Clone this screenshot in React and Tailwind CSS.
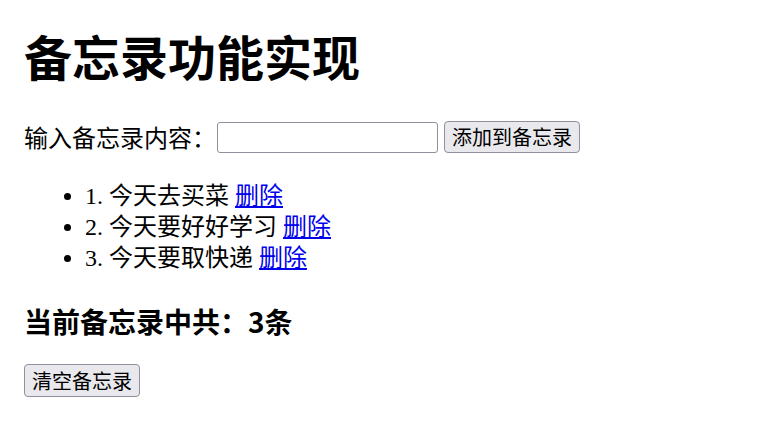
import React from "react";

const serif = { fontFamily: '"Liberation Serif", "Noto Sans CJK SC", serif' };

export default function App() {
  const items = ["今天去买菜", "今天要好好学习", "今天要取快递"];
  return (
    <div
      className="flex flex-col items-start pl-[24px] pt-[27px] text-black bg-white min-h-[432px]"
      style={serif}
    >
      <h1 className="text-[48px] leading-[56px] font-bold [font-family:'Noto_Sans_CJK_SC',sans-serif]">
        备忘录功能实现
      </h1>
      <div className="mt-[38px] flex items-center h-[32px] text-[24px] leading-[32px]">
        <span className="[font-family:'Noto_Sans_CJK_SC',sans-serif]">输入备忘录内容：</span>
        <input
          type="text"
          className="ml-[1px] w-[221px] h-[31px] border-[1.5px] border-[#8f8f9d] rounded-[3px] bg-white outline-none"
        />
        <button className="ml-[6px] h-[32px] px-[7px] bg-[#e9e9ed] border-[1.5px] border-[#8f8f9d] rounded-[4px] text-[20px] leading-[28px] text-black [font-family:'Noto_Sans_CJK_SC',sans-serif]">
          添加到备忘录
        </button>
      </div>
      <ul className="mt-[28px] list-disc pl-[61px] text-[24px] leading-[31px]">
        {items.map((t, i) => (
          <li key={i}>
            {i + 1}. {t}{" "}
            <a href="#" className="text-[#0000ee] underline">删除</a>
          </li>
        ))}
      </ul>
      <h3 className="mt-[30px] text-[28px] leading-[34px] font-bold [font-family:'Noto_Sans_CJK_SC',sans-serif]">
        当前备忘录中共：3条
      </h3>
      <button className="mt-[26px] h-[33px] px-[7px] bg-[#e9e9ed] border-[1.5px] border-[#8f8f9d] rounded-[4px] text-[20px] leading-[28px] text-black [font-family:'Noto_Sans_CJK_SC',sans-serif]">
        清空备忘录
      </button>
    </div>
  );
}
